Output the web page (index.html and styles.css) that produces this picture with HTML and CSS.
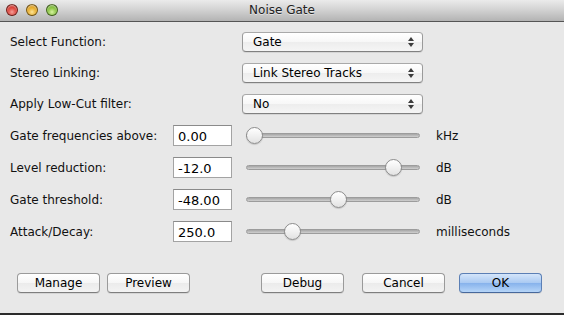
FILE: index.html
```
<!DOCTYPE html>
<html lang="en">
<head>
    <meta charset="UTF-8">
    <title>Noise Gate</title>
    <link rel="stylesheet" href="styles.css">
</head>
<body>
<div class="window">
    <div class="titlebar">
        <div class="lights">
            <span class="light red"></span>
            <span class="light yellow"></span>
            <span class="light green"></span>
        </div>
        <p class="title">Noise Gate</p>
    </div>
    <div class="content">
        <div class="form">
            <div class="row">
                <label class="label wide">Select Function:</label>
                <div class="popup"><span>Gate</span><i class="arrows"></i></div>
            </div>
            <div class="row">
                <label class="label wide">Stereo Linking:</label>
                <div class="popup"><span>Link Stereo Tracks</span><i class="arrows"></i></div>
            </div>
            <div class="row">
                <label class="label wide">Apply Low-Cut filter:</label>
                <div class="popup"><span>No</span><i class="arrows"></i></div>
            </div>
            <div class="row field">
                <label class="label">Gate frequencies above:</label>
                <div class="text">0.00</div>
                <div class="slider"><div class="track"></div><div class="thumb" style="left: 0px;"></div></div>
                <span class="unit">kHz</span>
            </div>
            <div class="row field">
                <label class="label">Level reduction:</label>
                <div class="text">-12.0</div>
                <div class="slider"><div class="track"></div><div class="thumb" style="left: 139px;"></div></div>
                <span class="unit">dB</span>
            </div>
            <div class="row field">
                <label class="label">Gate threshold:</label>
                <div class="text">-48.00</div>
                <div class="slider"><div class="track"></div><div class="thumb" style="left: 84px;"></div></div>
                <span class="unit">dB</span>
            </div>
            <div class="row field">
                <label class="label">Attack/Decay:</label>
                <div class="text">250.0</div>
                <div class="slider"><div class="track"></div><div class="thumb" style="left: 38px;"></div></div>
                <span class="unit">milliseconds</span>
            </div>
        </div>
        <div class="buttons">
            <a class="btn">Manage</a>
            <a class="btn preview">Preview</a>
            <a class="btn debug">Debug</a>
            <a class="btn cancel">Cancel</a>
            <a class="btn ok">OK</a>
        </div>
    </div>
</div>
</body>
</html>
```

FILE: styles.css
```
*{
    margin: 0;
    padding: 0;
    box-sizing: border-box;
}
html,body {
    height: 100%;
}
body{
    background-color: #e8e8e8;
    font-family: "DejaVu Sans", "Liberation Sans", sans-serif;
    font-size: 12px;
    color: #111111;
}
.window{
    height: 315px;
    width: 564px;
    display: flex;
    flex-direction: column;
    border-bottom: 2px solid #2b2b2b;
    background-color: #e8e8e8;
}
.titlebar{
    height: 22px;
    flex: none;
    background: linear-gradient(#ebebeb, #d3d3d3 45%, #b3b3b3);
    border-bottom: 1px solid #555555;
    position: relative;
    display: flex;
    align-items: center;
    justify-content: center;
}
.lights{
    position: absolute;
    left: 6px;
    top: 4px;
    display: flex;
    gap: 8px;
}
.light{
    width: 12px;
    height: 12px;
    border-radius: 50%;
    border: 1px solid rgba(0,0,0,0.45);
    box-shadow: inset 0 1px 2px rgba(255,255,255,0.6);
}
.red{
    background: radial-gradient(circle at 50% 70%, #f6a19a, #d8372e 55%, #9e1b14);
}
.yellow{
    background: radial-gradient(circle at 50% 70%, #fde59a, #e3a51c 55%, #a76c0a);
}
.green{
    background: radial-gradient(circle at 50% 70%, #d7f3a2, #7fbd35 55%, #4b8417);
}
.title{
    color: #222222;
    text-shadow: 0 1px 0 rgba(255,255,255,0.5);
    margin-top: -1px;
}
.content{
    flex: 1;
    display: flex;
    flex-direction: column;
}
.form{
    padding: 10px 0 0 10px;
    display: grid;
    grid-template-rows: 20px 20px 20px 21px 21px 21px 21px;
    row-gap: 11px;
}
.row{
    display: flex;
    align-items: center;
}
.label{
    width: 163px;
    flex: none;
}
.label.wide{
    width: 232px;
}
.popup{
    width: 181px;
    height: 20px;
    border: 1px solid #9a9a9a;
    border-top-color: #a9a9a9;
    border-bottom-color: #808080;
    border-radius: 4px;
    background: linear-gradient(#ffffff, #f7f7f7 50%, #ededed 51%, #f5f5f5);
    box-shadow: 0 1px 0 rgba(0,0,0,0.08);
    display: flex;
    align-items: center;
    padding-left: 10px;
    position: relative;
    color: #000000;
}
.arrows{
    position: absolute;
    right: 8px;
    top: 4px;
    width: 6px;
    height: 10px;
}
.arrows::before,.arrows::after{
    content: "";
    position: absolute;
    left: 0;
    border-left: 3px solid transparent;
    border-right: 3px solid transparent;
}
.arrows::before{
    top: 0;
    border-bottom: 4px solid #3c3c3c;
}
.arrows::after{
    bottom: 0;
    border-top: 4px solid #3c3c3c;
}
.text{
    width: 59px;
    height: 21px;
    flex: none;
    background-color: #ffffff;
    border: 1px solid #a3a3a3;
    border-top-color: #8a8a8a;
    padding: 3px 0 0 4px;
    font-size: 13px;
    color: #000000;
}
.slider{
    width: 174px;
    height: 18px;
    margin-left: 14px;
    flex: none;
    position: relative;
}
.track{
    position: absolute;
    left: 0;
    right: 0;
    top: 6px;
    height: 5px;
    border-radius: 3px;
    border: 1px solid #9c9c9c;
    background: linear-gradient(#a6a6a6, #cfcfcf);
}
.thumb{
    position: absolute;
    top: 0;
    width: 17px;
    height: 17px;
    border-radius: 50%;
    border: 1px solid #8c8c8c;
    background: linear-gradient(#ffffff, #f1f1f1 50%, #e2e2e2);
    box-shadow: 0 1px 1px rgba(0,0,0,0.15);
}
.unit{
    margin-left: 16px;
}
.buttons{
    display: flex;
    margin-top: 31px;
    padding-left: 17px;
}
.btn{
    width: 83px;
    height: 20px;
    line-height: 18px;
    text-align: center;
    border: 1px solid #9a9a9a;
    border-bottom-color: #7e7e7e;
    border-radius: 4px;
    background: linear-gradient(#ffffff, #f6f6f6 50%, #ebebeb 51%, #f3f3f3);
    box-shadow: 0 1px 0 rgba(0,0,0,0.08);
    color: #000000;
}
.preview{
    margin-left: 7px;
}
.debug{
    margin-left: 71px;
}
.cancel{
    margin-left: 18px;
}
.ok{
    margin-left: 14px;
    border-color: #5b7fb5;
    border-bottom-color: #47689b;
    background: linear-gradient(#d4e5fa, #a9c9f2 50%, #86b2ec 51%, #b6d5f8);
}
```
